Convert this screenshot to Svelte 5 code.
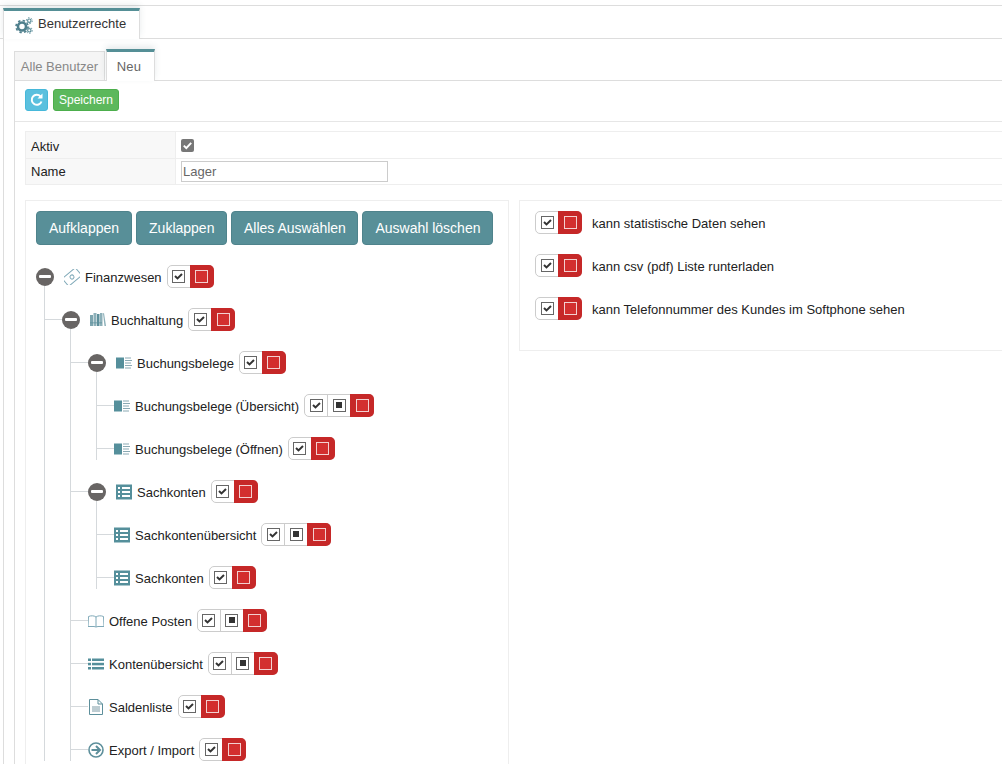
<script lang="ts">
  type Node = { label: string; icon: string; three?: boolean; children?: Node[] };

  const tree: Node[] = [
    {
      label: 'Finanzwesen', icon: 'money', children: [
        {
          label: 'Buchhaltung', icon: 'books', children: [
            {
              label: 'Buchungsbelege', icon: 'columns', children: [
                { label: 'Buchungsbelege (Übersicht)', icon: 'columns', three: true },
                { label: 'Buchungsbelege (Öffnen)', icon: 'columns' }
              ]
            },
            {
              label: 'Sachkonten', icon: 'thlist', children: [
                { label: 'Sachkontenübersicht', icon: 'thlist', three: true },
                { label: 'Sachkonten', icon: 'thlist' }
              ]
            },
            { label: 'Offene Posten', icon: 'book', three: true },
            { label: 'Kontenübersicht', icon: 'list', three: true },
            { label: 'Saldenliste', icon: 'doc' },
            { label: 'Export / Import', icon: 'arrow' }
          ]
        }
      ]
    }
  ];

  const rights = [
    'kann statistische Daten sehen',
    'kann csv (pdf) Liste runterladen',
    'kann Telefonnummer des Kundes im Softphone sehen'
  ];
</script>

{#snippet toggle(three)}
  <span class="toggle">
    <span class="opt">
      <span class="box">
        <svg width="11" height="11" viewBox="0 0 11 11"><path d="M2 5 4.500 7.400 9 3" fill="none" stroke="#333" stroke-width="2"/></svg>
      </span>
    </span>
    {#if three}
      <span class="opt mid"><span class="box"><span class="dot"></span></span></span>
    {/if}
    <span class="opt deny"><span class="redbox"></span></span>
  </span>
{/snippet}

{#snippet icon(name)}
  <svg class="ic" width="16" height="16" viewBox="0 0 16 16">
    {#if name === 'money'}
      <g transform="rotate(-40 8 8)" fill="none" stroke="#7fa9b8">
        <rect x="-0.500" y="3" width="17" height="10" rx="1"/>
        <circle cx="8" cy="8" r="2"/>
      </g>
    {:else if name === 'books'}
      <g fill="#5d8f9b">
        <rect x="0" y="3" width="3" height="11" opacity="0.8"/>
        <rect x="3.500" y="1" width="3" height="13" opacity="0.7"/>
        <rect x="7" y="2" width="2.500" height="12"/>
        <rect x="10" y="1" width="2.500" height="13" opacity="0.7"/>
        <path d="M13 1.500 14 1 16 14 14.500 14Z" opacity="0.7"/>
        <rect x="0" y="10" width="12" height="1.500" opacity="0.5"/>
      </g>
    {:else if name === 'columns'}
      <rect x="0" y="2.500" width="8" height="11" fill="#558f9b"/>
      <path d="M9 3h6M9 5.500h7M9 8h6M9 10.500h7M9 13h6" stroke="#8aa9b3" stroke-width="1"/>
    {:else if name === 'thlist'}
      <rect x="0" y="0.500" width="16" height="15" fill="#558f9b"/>
      <g fill="#fff">
        <rect x="2" y="3" width="2" height="2"/>
        <rect x="2" y="7" width="2" height="2"/>
        <rect x="2" y="11" width="2" height="2"/>
        <rect x="6" y="3" width="8" height="2"/>
        <rect x="6" y="7" width="8" height="2"/>
        <rect x="6" y="11" width="8" height="2"/>
      </g>
    {:else if name === 'book'}
      <path d="M0.500 3.500c2.500-1 5.500-1 7.500 0.500c2-1.500 5-1.500 7.500-0.500l0.500 10h-6l-2 0.500-2-0.500h-6zM8 4v10" fill="none" stroke="#7fa9b8"/>
    {:else if name === 'list'}
      <g fill="#558f9b">
        <rect x="0" y="2.500" width="3" height="2.500"/>
        <rect x="0" y="6.800" width="3" height="2.500"/>
        <rect x="0" y="11" width="3" height="2.500"/>
        <rect x="4" y="2.500" width="12" height="2.500"/>
        <rect x="4" y="6.800" width="12" height="2.500"/>
        <rect x="4" y="11" width="12" height="2.500"/>
      </g>
    {:else if name === 'doc'}
      <path d="M1.500 0.500h8.500l4.500 4.500v10.500h-13zM10 0.500v4.500h4.500" fill="none" stroke="#5d8f9b"/>
      <path d="M4 8h8M4 10h8M4 12h8" stroke="#7c9aa5"/>
    {:else if name === 'arrow'}
      <circle cx="8" cy="8" r="7" fill="none" stroke="#5d8f9b" stroke-width="1.600"/>
      <path d="M3.500 8h8M8 4l4 4-4 4" fill="none" stroke="#5d8f9b" stroke-width="2"/>
    {/if}
  </svg>
{/snippet}

{#snippet nodes(items, sub)}
  <ul class="tree" class:sub>
    {#each items as node}
      <li>
        <div class="row">
          {#if node.children}
            <span class="minus"><span class="bar"></span></span>
          {/if}
          {@render icon(node.icon)}
          <span class="label">{node.label}</span>
          {@render toggle(node.three)}
        </div>
        {#if node.children}
          {@render nodes(node.children, true)}
        {/if}
      </li>
    {/each}
  </ul>
{/snippet}

<div class="page">
  <div class="tabbar top">
    <div class="tab active first">
      <svg class="gears" width="18" height="18" viewBox="0 0 18 18">
        <circle cx="7" cy="10.500" r="4" fill="none" stroke="#4f7f8c" stroke-width="2.600"/>
        <circle cx="7" cy="10.500" r="6" fill="none" stroke="#4f7f8c" stroke-width="1.600" stroke-dasharray="2.400 2.300"/>
        <circle cx="14.300" cy="4.700" r="1.700" fill="none" stroke="#5d8f9b" stroke-width="1.200"/>
        <circle cx="14.300" cy="4.700" r="3" fill="none" stroke="#5d8f9b" stroke-width="1" stroke-dasharray="1.500 1.600"/>
        <circle cx="14.300" cy="14.300" r="1.700" fill="none" stroke="#5d8f9b" stroke-width="1.200"/>
        <circle cx="14.300" cy="14.300" r="3" fill="none" stroke="#5d8f9b" stroke-width="1" stroke-dasharray="1.500 1.600"/>
      </svg>
      Benutzerrechte
    </div>
  </div>

  <div class="outer">
    <div class="tabbar second">
      <div class="tab idle">Alle Benutzer</div>
      <div class="tab active neu">Neu</div>
    </div>

    <div class="inner">
      <div class="toolbar">
        <button class="btn refresh" aria-label="Aktualisieren">
          <svg width="14" height="14" viewBox="0 0 14 14">
            <path d="M11.500 8.500A5 5 0 1 1 10.500 3.500" fill="none" stroke="#fff" stroke-width="2"/>
            <path d="M12.500 0.500v5h-5z" fill="#fff"/>
          </svg>
        </button>
        <button class="btn save">Speichern</button>
      </div>

      <div class="form">
        <div class="cell name first-name">Aktiv</div>
        <div class="cell value">
          <span class="checked">
            <svg width="13" height="13" viewBox="0 0 13 13"><path d="M2.800 6.600 5.300 9.100 10.200 3.900" fill="none" stroke="#fff" stroke-width="2"/></svg>
          </span>
        </div>
        <div class="cell name">Name</div>
        <div class="cell value"><input class="text" value="Lager" /></div>
      </div>

      <div class="panels">
        <div class="panel tree-panel">
          <div class="actions">
            <button class="act">Aufklappen</button>
            <button class="act">Zuklappen</button>
            <button class="act tight">Alles Auswählen</button>
            <button class="act">Auswahl löschen</button>
          </div>
          {@render nodes(tree, false)}
        </div>

        <div class="panel rights">
          {#each rights as r}
            <div class="right-row">
              {@render toggle(false)}
              <span class="right-text">{r}</span>
            </div>
          {/each}
        </div>
      </div>
    </div>
  </div>
</div>

<style>
  :global(body) {
    margin: 0;
    background: #fff;
    overflow: hidden;
  }

  .page {
    width: 1002px;
    height: 764px;
    overflow: hidden;
    font-family: "Liberation Sans", Arial, sans-serif;
    font-size: 13px;
    color: #222;
    padding-top: 5px;
    box-sizing: border-box;
  }

  .tabbar {
    display: flex;
    align-items: flex-end;
    box-sizing: border-box;
    border-bottom: 1px solid #ddd;
  }

  .top {
    height: 34px;
    border-top: 1px solid #ddd;
    padding-left: 3px;
  }

  .second {
    height: 42px;
  }

  .tab {
    box-sizing: border-box;
    margin-bottom: -1px;
    display: flex;
    align-items: center;
  }

  .active {
    background: #fff;
    border-top: 3px solid #558f96;
    border-right: 1px solid #ddd;
    border-left: 1px solid #ddd;
    box-shadow: 0 -3px 6px rgba(60, 90, 100, 0.12);
  }

  .first {
    width: 137px;
    height: 31px;
    padding-left: 11px;
    padding-bottom: 3px;
    gap: 5px;
    color: #333;
  }

  .gears {
    margin-top: 3px;
  }

  .idle {
    width: 91px;
    height: 30px;
    margin-right: 1px;
    justify-content: center;
    background: #f5f5f5;
    border: 1px solid #ddd;
    color: #888;
  }

  .neu {
    width: 49px;
    height: 32px;
    justify-content: center;
    color: #666;
    padding-bottom: 1px;
    padding-right: 3px;
    letter-spacing: 0.3px;
  }

  .outer {
    margin-left: 3px;
    padding-left: 10px;
    border-left: 1px solid #ddd;
    height: 725px;
  }

  .inner {
    border-left: 1px solid #ddd;
    height: 700px;
  }

  .toolbar {
    display: flex;
    align-items: flex-start;
    gap: 5px;
    box-sizing: border-box;
    height: 41px;
    padding: 8px 0 0 10px;
    border-bottom: 1px solid #e6e6e6;
  }

  .btn {
    height: 22px;
    padding: 0;
    border-radius: 3px;
    color: #fff;
    font-family: inherit;
    font-size: 12px;
    display: flex;
    align-items: center;
    justify-content: center;
  }

  .refresh {
    width: 23px;
    background: #5bc0de;
    border: 1px solid #46b8da;
  }

  .save {
    width: 66px;
    background: #5cb85c;
    border: 1px solid #4cae4c;
  }

  .form {
    display: grid;
    grid-template-columns: 149px 1fr;
    grid-template-rows: 26px 26px;
    margin: 9px 0 0 10px;
    border-top: 1px solid #eee;
    border-bottom: 1px solid #eee;
    border-left: 1px solid #eee;
  }

  .cell {
    display: flex;
    align-items: center;
    box-sizing: border-box;
    padding-left: 5px;
  }

  .cell:nth-child(n+3) {
    border-top: 1px solid #eee;
  }

  .name {
    background: #f8f8f8;
    color: #222;
  }

  .first-name {
    padding-top: 2px;
  }

  .value {
    border-left: 1px solid #eee;
    padding-left: 5px;
  }

  .checked {
    width: 13px;
    height: 13px;
    border-radius: 2px;
    background: #777;
  }

  .checked svg {
    display: block;
  }

  .text {
    box-sizing: border-box;
    width: 207px;
    height: 21px;
    padding: 0 1px;
    border: 1px solid #ccc;
    font-family: inherit;
    font-size: 13px;
    color: #666;
    outline: none;
  }

  .panels {
    display: flex;
    align-items: flex-start;
    gap: 10px;
    margin: 15px 0 0 10px;
  }

  .panel {
    box-sizing: border-box;
    border: 1px solid #eee;
  }

  .tree-panel {
    width: 484px;
    height: 620px;
    padding: 10px;
  }

  .rights {
    flex: 1;
    height: 151px;
    padding: 10px 15px;
    border-right: none;
  }

  .right-row {
    display: flex;
    align-items: center;
    gap: 10px;
    height: 23px;
    margin-bottom: 20px;
  }

  .right-text {
    padding-top: 2px;
  }

  .actions {
    display: flex;
    gap: 4px;
  }

  .act {
    height: 34px;
    padding: 0 12px;
    background: #588f98;
    border: 1px solid #4f838c;
    border-radius: 4px;
    color: #fff;
    font-family: inherit;
    font-size: 14px;
    white-space: nowrap;
  }

  .tight {
    padding: 0 11.500px;
  }

  .tree {
    list-style: none;
    margin: 10px 0 0 0;
    padding: 0;
    position: relative;
  }

  .sub {
    margin: 0;
    padding-left: 26px;
  }

  .sub::before {
    content: "";
    position: absolute;
    left: 8px;
    top: -12px;
    bottom: 10px;
    width: 1px;
    background: #d5d9dc;
  }

  .tree li {
    position: relative;
  }

  .sub > li::before {
    content: "";
    position: absolute;
    left: -17px;
    top: 21px;
    width: 17px;
    height: 1px;
    background: #d5d9dc;
  }

  .row {
    display: flex;
    align-items: center;
    height: 43px;
    position: relative;
  }

  .minus {
    width: 18px;
    height: 18px;
    border-radius: 50%;
    background: #686564;
    margin-right: 10px;
    display: flex;
    align-items: center;
    justify-content: center;
  }

  .bar {
    width: 12px;
    height: 3px;
    background: #fff;
    border-radius: 1px;
  }

  .ic {
    flex: none;
  }

  .label {
    margin-left: 5px;
    padding-top: 2px;
    color: #222;
    white-space: nowrap;
  }

  .toggle {
    display: inline-flex;
    flex: none;
    box-sizing: border-box;
    height: 23px;
    margin-left: 5px;
    border: 1px solid #ccc;
    border-radius: 5px;
    background: #fff;
  }

  .right-row .toggle {
    margin-left: 0;
  }

  .opt {
    box-sizing: border-box;
    width: 22px;
    display: flex;
    align-items: center;
    justify-content: center;
  }

  .mid {
    width: 23px;
    border-left: 1px solid #ccc;
  }

  .deny {
    width: 24px;
    margin: -1px -1px -1px 0;
    background: #c62828;
    border-radius: 0 5px 5px 0;
  }

  .box {
    box-sizing: border-box;
    width: 13px;
    height: 13px;
    border: 1px solid #666;
    display: flex;
    align-items: center;
    justify-content: center;
    margin-bottom: 1px;
  }

  .dot {
    width: 6px;
    height: 6px;
    background: #333;
  }

  .redbox {
    box-sizing: border-box;
    width: 13px;
    height: 13px;
    background: #d32f2f;
    border: 1px solid #f3d0d0;
    margin-bottom: 1px;
  }
</style>
